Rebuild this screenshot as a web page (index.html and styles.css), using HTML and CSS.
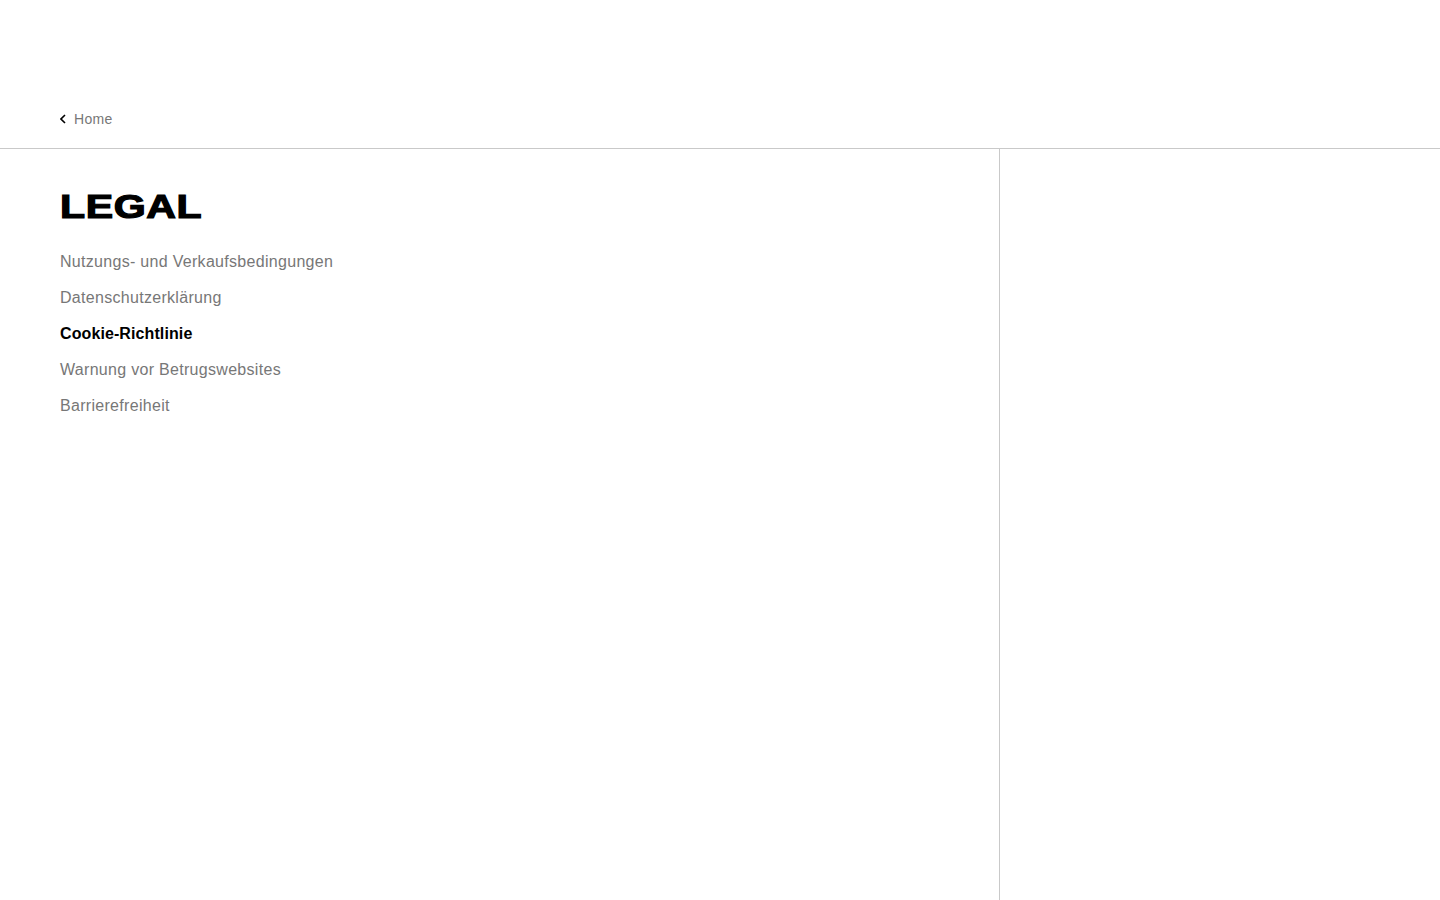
FILE: index.html
```html
<!DOCTYPE html>
<html lang="de">
<head>
<meta charset="utf-8">
<title>Legal</title>
<link rel="stylesheet" href="styles.css">
</head>
<body>
<header class="top">
  <a class="back" href="#">
    <svg class="chev" width="6" height="10" viewBox="0 0 6 10"><path d="M5 1 1 5l4 4" fill="none" stroke="#000" stroke-width="1.6"/></svg>
    <span>Home</span>
  </a>
</header>
<main class="layout">
  <aside class="side">
    <h1 class="title">LEGAL</h1>
    <nav class="links">
      <a href="#">Nutzungs- und Verkaufsbedingungen</a>
      <a href="#">Datenschutzerklärung</a>
      <a href="#" class="active">Cookie-Richtlinie</a>
      <a href="#">Warnung vor Betrugswebsites</a>
      <a href="#">Barrierefreiheit</a>
    </nav>
  </aside>
  <section class="content"></section>
</main>
</body>
</html>
```
FILE: styles.css
```css
* { box-sizing: border-box; }
html, body { margin: 0; padding: 0; height: 100%; }
body {
  font-family: "Liberation Sans", Arial, sans-serif;
  background: #fff;
  color: #000;
  display: flex;
  flex-direction: column;
  min-height: 900px;
}
.top {
  height: 149px;
  border-bottom: 1px solid #c9c9c9;
  display: flex;
  align-items: flex-end;
  padding: 0 60px 19px;
}
.back {
  display: flex;
  align-items: center;
  gap: 8px;
  text-decoration: none;
  color: #777;
  font-size: 14px;
  line-height: 20px;
  letter-spacing: 0.3px;
}
.chev { display: block; }
.layout {
  flex: 1;
  display: flex;
}
.side {
  width: 1000px;
  border-right: 1px solid #c9c9c9;
  padding: 40px 60px;
}
.title {
  margin: 0;
  font-size: 33px;
  line-height: 36px;
  font-weight: 700;
  -webkit-text-stroke: 1.2px #000;
  transform: scaleX(1.245);
  transform-origin: left center;
  display: inline-block;
  letter-spacing: 0.5px;
}
.links {
  margin-top: 19px;
  display: flex;
  flex-direction: column;
}
.links a {
  color: #777;
  text-decoration: none;
  font-size: 16px;
  line-height: 36px;
  letter-spacing: 0.3px;
}
.links a.active {
  color: #000;
  font-weight: 700;
  letter-spacing: 0.1px;
}
.content { flex: 1; }
```
